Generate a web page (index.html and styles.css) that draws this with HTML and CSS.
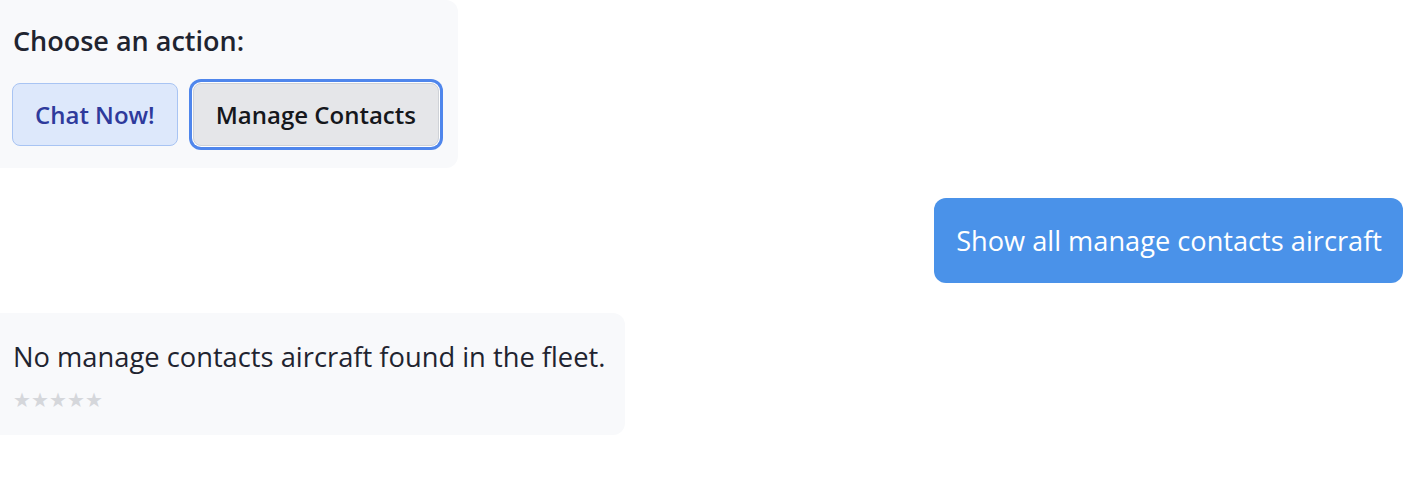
FILE: index.html
```html
<!DOCTYPE html>
<html lang="en">
<head>
<meta charset="utf-8">
<title>Chat</title>
<link rel="stylesheet" href="styles.css">
</head>
<body>
<div class="chat">
  <div class="msg bot first">
    <div class="prompt">Choose an action:</div>
    <div class="actions">
      <button class="btn btn-primary">Chat Now!</button>
      <button class="btn btn-secondary focused">Manage Contacts</button>
    </div>
  </div>
  <div class="msg user">Show all manage contacts aircraft</div>
  <div class="msg bot reply">
    <div class="text">No manage contacts aircraft found in the fleet.</div>
    <div class="stars">★★★★★</div>
  </div>
</div>
</body>
</html>
```
FILE: styles.css
```css
html, body {
  margin: 0;
  padding: 0;
  background: #ffffff;
}
body {
  font-family: "Open Sans", "Noto Sans", sans-serif;
  color: #1f2430;
}
.chat {
  display: flex;
  flex-direction: column;
  gap: 30px;
  padding: 0 24px 0 0;
}
.msg {
  border-radius: 12px;
}
.bot {
  align-self: flex-start;
  background: #f8f9fb;
  border-top-left-radius: 0;
  border-bottom-left-radius: 0;
}
.first {
  padding: 23px 19px 22px 12px;
}
.prompt {
  font-size: 27px;
  font-weight: 600;
  line-height: 36px;
  color: #1f2430;
  padding-left: 1px;
}
.actions {
  display: flex;
  gap: 15px;
  margin-top: 24px;
}
.btn {
  font-family: inherit;
  font-size: 24px;
  font-weight: 600;
  height: 63px;
  padding: 0 22px;
  border-radius: 8px;
  cursor: pointer;
}
.btn-primary {
  background: #dde8fb;
  border: 1px solid #a8c4f3;
  color: #2e3a9c;
}
.btn-secondary {
  background: #e5e6e9;
  border: 1px solid #cfd2d7;
  color: #15171c;
}
.focused {
  box-shadow: 0 0 0 1px #ffffff, 0 0 0 4px #4f86ec;
}
.user {
  align-self: flex-end;
  background: #4a92e9;
  color: #ffffff;
  font-size: 27.2px;
  line-height: 36px;
  padding: 25px 21px 24px 22px;
}
.bot .text {
  font-size: 27.3px;
  line-height: 36px;
}
.reply {
  padding: 26px 20px 23px 13px;
}
.stars {
  margin-top: 13px;
  font-size: 20px;
  line-height: 24px;
  color: #d5d7db;
}
```
